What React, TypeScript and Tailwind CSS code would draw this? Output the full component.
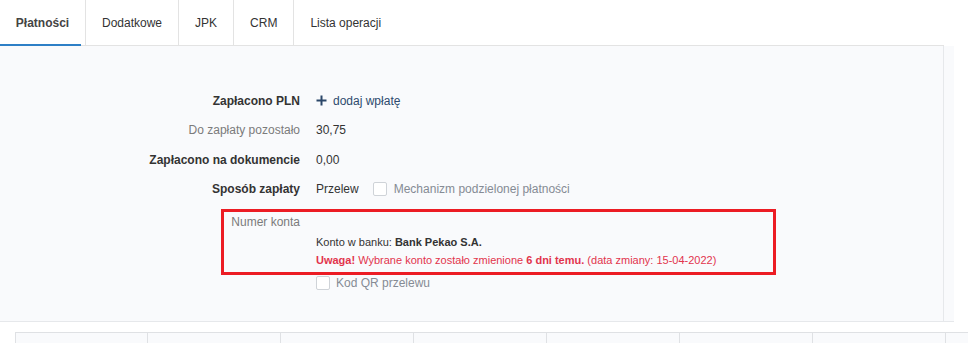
import { useState } from 'react';

const tabs = ['Płatności', 'Dodatkowe', 'JPK', 'CRM', 'Lista operacji'];

function Checkbox({ checked = false }: { checked?: boolean }) {
  return (
    <span
      className={`inline-block w-[14px] h-[14px] rounded-[2px] border border-[#cfd3d8] ${
        checked ? 'bg-[#2d7fc6]' : 'bg-white'
      }`}
    />
  );
}

function Row({ label, bold, muted, children }: { label: string; bold?: boolean; muted?: boolean; children: React.ReactNode }) {
  return (
    <div className="grid grid-cols-[316px_1fr] h-[29.5px] items-center">
      <div
        className={`text-right pr-4 ${bold ? 'font-bold text-[#333]' : ''} ${muted ? 'text-[#7b7b7b]' : ''}`}
      >
        {label}
      </div>
      <div className="flex items-center text-[#333]">{children}</div>
    </div>
  );
}

export default function App() {
  const [active, setActive] = useState(0);

  return (
    <div className="w-[968px] h-[343px] overflow-hidden bg-white text-[12px] leading-4 text-[#333] font-['Liberation_Sans',Arial,sans-serif]">
      {/* Tabs */}
      <div className="flex w-[944px] h-[46px] border-b border-[#e3e3e3]">
        {tabs.map((t, i) => (
          <button
            key={t}
            onClick={() => setActive(i)}
            className={`relative h-[45px] border-r border-[#e3e3e3] last:border-r-0 ${
              i === active ? 'font-bold text-[#444] w-[86px] px-[15px]' : 'text-[#333] px-4'
            }`}
          >
            {t}
            {i === active && <span className="absolute left-0 right-[4px] bottom-[-1px] h-[2px] bg-[#2d7fc6]" />}
          </button>
        ))}
      </div>

      {/* Panel */}
      <div className="relative w-[954px] bg-[#f9fafc] border-b border-[#e6e8eb]">
        <div className="w-[944px] border-r border-[#e6e8eb] pt-[40px] pb-[30px]">
          <Row label="Zapłacono PLN" bold>
            <svg width="11" height="11" viewBox="0 0 11 11" className="mr-[6px]">
              <path d="M5.5 0.5v10M0.5 5.5h10" stroke="#2b4668" strokeWidth="2" />
            </svg>
            <span className="text-[#2e4a6e]">dodaj wpłatę</span>
          </Row>
          <Row label="Do zapłaty pozostało" muted>
            30,75
          </Row>
          <Row label="Zapłacono na dokumencie" bold>
            0,00
          </Row>
          <Row label="Sposób zapłaty" bold>
            <span>Przelew</span>
            <span className="ml-[14px] mr-[7px] flex">
              <Checkbox />
            </span>
            <span className="text-[#858b94]">Mechanizm podzielonej płatności</span>
          </Row>

          {/* Numer konta */}
          <div className="grid grid-cols-[316px_1fr] mt-[10px]">
            <div className="text-right pr-4 text-[#7b7b7b]">Numer konta</div>
            <div className="pt-[19px] text-[11px] leading-[18px]">
              <div className="text-[#333]">
                Konto w banku: <span className="font-bold">Bank Pekao S.A.</span>
              </div>
              <div className="text-[#e2344c]">
                <span className="font-bold">Uwaga!</span> Wybrane konto zostało zmienione{' '}
                <span className="font-bold">6 dni temu.</span> (data zmiany: 15-04-2022)
              </div>
            </div>
          </div>
          <div className="grid grid-cols-[316px_1fr] mt-[6px]">
            <div />
            <div className="flex items-center gap-[6px]">
              <Checkbox />
              <span className="text-[#858b94]">Kod QR przelewu</span>
            </div>
          </div>
        </div>

        {/* highlight annotation */}
        <div className="absolute left-[221px] top-[163px] w-[555px] h-[66px] border-[3px] border-[#ec1c24] pointer-events-none" />
      </div>

      {/* Table header */}
      <div className="mt-[10px] ml-[15px] flex border-t border-[#dfe1e4] h-[20px] w-[953px]">
        {Array.from({ length: 8 }).map((_, i) => (
          <div
            key={i}
            className={`shrink-0 h-full bg-[#f9fafc] border-l border-[#dfe1e4] ${i === 0 ? 'w-[132px]' : 'w-[133px]'}`}
          />
        ))}
      </div>
    </div>
  );
}
